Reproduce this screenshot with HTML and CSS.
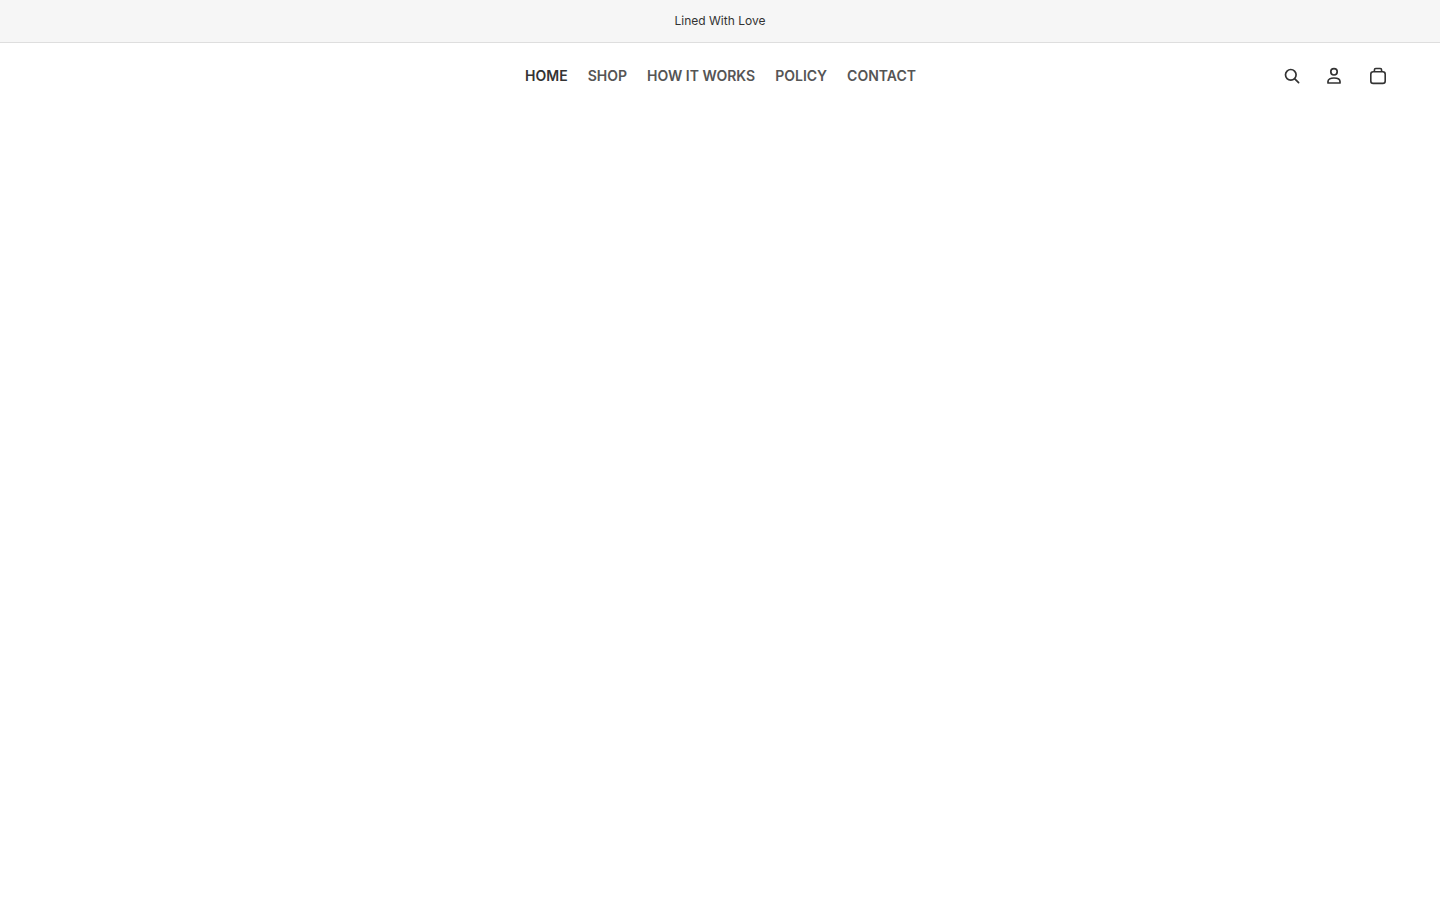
FILE: index.html
```html
<!DOCTYPE html>
<html lang="en">
<head>
    <meta charset="UTF-8">
    <title>Lined With Love</title>
    <link rel="stylesheet" href="styles.css">
</head>
<body>
    <div class="announcement">Lined With Love</div>
    <header class="site-header">
        <nav class="main-nav">
            <a href="#" class="nav-link active">HOME</a>
            <a href="#" class="nav-link">SHOP</a>
            <a href="#" class="nav-link">HOW IT WORKS</a>
            <a href="#" class="nav-link">POLICY</a>
            <a href="#" class="nav-link">CONTACT</a>
        </nav>
        <div class="header-icons">
            <a href="#" class="icon-link" aria-label="Search">
                <svg width="18" height="18" viewBox="0 0 18 18" fill="none" stroke="#333" stroke-width="1.7" stroke-linecap="round">
                    <circle cx="7.8" cy="7.8" r="5.3"/>
                    <path d="M11.8 11.8L15.6 15.6"/>
                </svg>
            </a>
            <a href="#" class="icon-link" aria-label="Account">
                <svg width="18" height="18" viewBox="0 0 18 18" fill="none" stroke="#333" stroke-width="1.7" stroke-linejoin="round">
                    <circle cx="9" cy="4.8" r="3.2"/>
                    <path d="M3 16h12v-1.4c0-2.2-2.4-3.6-6-3.6s-6 1.4-6 3.6z"/>
                </svg>
            </a>
            <a href="#" class="icon-link cart-link" aria-label="Cart">
                <svg width="18" height="18" viewBox="0 0 18 18" fill="none" stroke="#333" stroke-width="1.6" stroke-linejoin="round">
                    <rect x="1.8" y="4.8" width="14.4" height="11.6" rx="2.4"/>
                    <path d="M5.4 4.8V2.9c0-0.8 0.6-1.4 1.4-1.4h4.4c0.8 0 1.4 0.6 1.4 1.4v1.9"/>
                </svg>
            </a>
        </div>
    </header>
</body>
</html>
```

FILE: styles.css
```css
body {
    margin: 0;
    background-color: #fff;
    font-family: Inter, "Liberation Sans", sans-serif;
    color: #333;
}
.announcement {
    height: 42px;
    line-height: 41px;
    background-color: #f6f6f6;
    border-bottom: 1px solid #dedede;
    text-align: center;
    font-size: 12px;
}
.site-header {
    display: flex;
    align-items: center;
    justify-content: flex-end;
    height: 66px;
    padding-right: 53px;
}
.main-nav {
    display: flex;
    gap: 20px;
    margin-right: 367px;
    padding-bottom: 2px;
}
.nav-link {
    color: #555;
    text-decoration: none;
    font-size: 14px;
    font-weight: 600;
}
.nav-link.active {
    color: #333;
}
.header-icons {
    display: flex;
    gap: 24px;
}
.icon-link {
    display: flex;
}
.cart-link {
    margin-left: 2px;
}
```
